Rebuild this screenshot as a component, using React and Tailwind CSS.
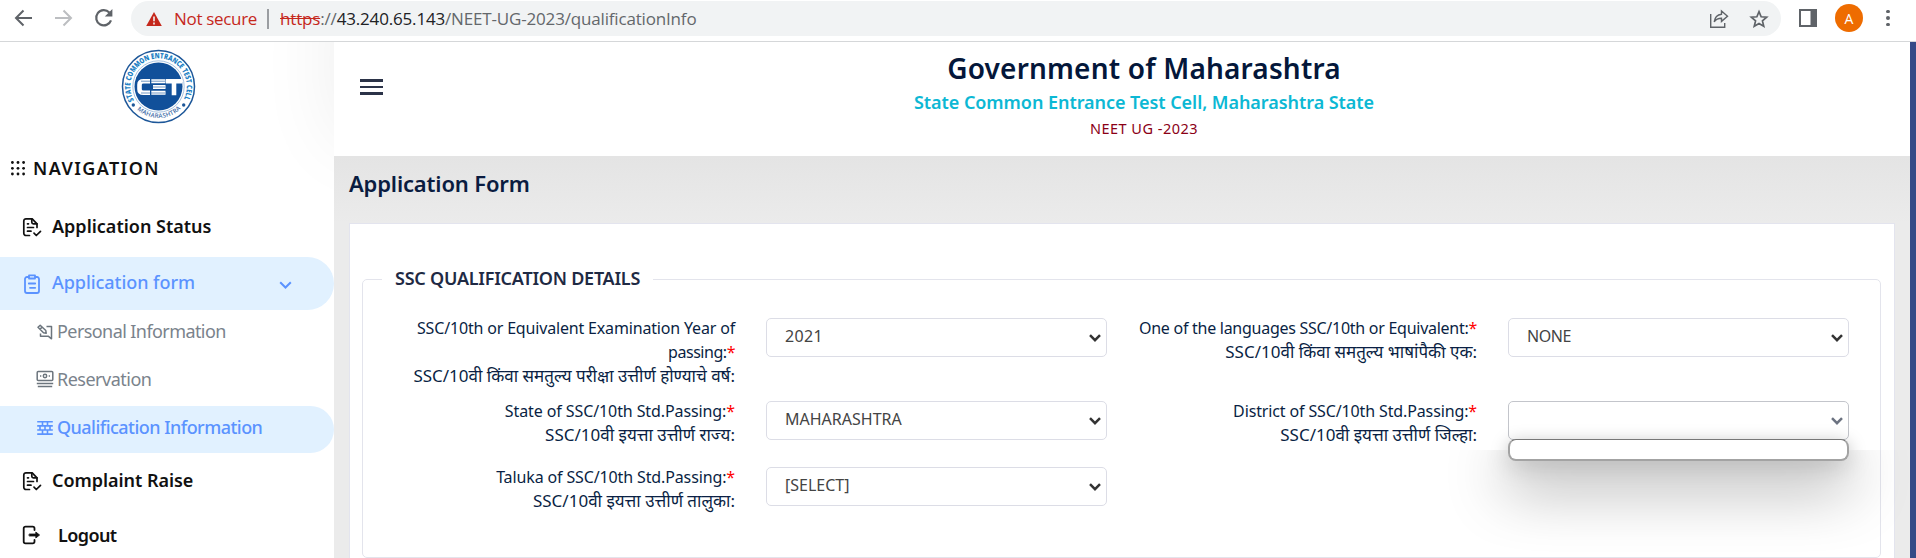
const ui = "font-['Noto_Sans',sans-serif]";

function BrowserBar() {
  return (
    <div className="flex h-[42px] w-full items-start border-b border-[#d5d7d9] bg-white font-['Open_Sans',sans-serif]">
      <div className="flex h-[36px] w-[131px] items-center pl-[13px]">
        <svg className="h-[22px] w-[22px]" viewBox="0 0 22 22" fill="none" stroke="#5f6368" strokeWidth="2">
          <path d="M19 11H3.5M10.5 3.5L3 11l7.5 7.5" />
        </svg>
        <svg className="ml-[18px] h-[22px] w-[22px]" viewBox="0 0 22 22" fill="none" stroke="#bcbec1" strokeWidth="2">
          <path d="M2 11h15.500M10.500 3.500L18 11l-7.500 7.500" />
        </svg>
        <svg className="ml-[18px] h-[22px] w-[22px]" viewBox="0 0 22 22" fill="none">
          <path d="M18 13.300A7.600 7.600 0 1 1 16.300 5.500" stroke="#5f6368" strokeWidth="2.200" />
          <path d="M19.400 2v7.600h-7.600z" fill="#5f6368" />
        </svg>
      </div>
      <div className="mt-px flex h-[35px] w-[1650px] items-center rounded-full bg-[#f1f3f4] pl-[15px] pr-[12px] text-[17px] leading-[35px]">
        <svg className="h-[16px] w-[16px]" viewBox="0 0 16 16">
          <path d="M8 1l7.800 14H.2z" fill="#c5281c" />
          <path d="M8 5.500v4.800M8 11.600v1.800" stroke="#f1f3f4" strokeWidth="1.600" />
        </svg>
        <span className="ml-[12px] w-[93px] whitespace-nowrap tracking-[-0.32px] text-[#c5281c]">Not secure</span>
        <span className="h-[20px] w-[2px] bg-[#9a9da1]" />
        <span className="ml-[11px] whitespace-nowrap tracking-[-0.17px] text-[#63676b]">
          <span className="text-[#c5281c] line-through">https</span>://
          <span className="text-[#202124]">43.240.65.143</span>/NEET-UG-2023/qualificationInfo
        </span>
        <svg className="ml-auto h-[20px] w-[20px]" viewBox="0 0 20 20" fill="none" stroke="#5f6368" strokeWidth="1.400">
          <path d="M1.700 5v13.200h14V14" />
          <path d="M12.500 2l6 5.200-6 5.200V9.300c-3.600 0-5.700 1.200-7.300 3.600.5-4 2.700-7.200 7.300-7.700z" />
        </svg>
        <svg className="ml-[20px] h-[20px] w-[20px]" viewBox="0 0 20 20" fill="none" stroke="#5f6368" strokeWidth="1.700">
          <path d="M10 2.700l2.150 5.100 5.500.45-4.200 3.600 1.300 5.400L10 14.400l-4.750 2.850 1.300-5.400-4.200-3.600 5.500-.45z" />
        </svg>
      </div>
      <div className="flex h-[36px] items-center pl-[18px]">
        <svg className="h-[18px] w-[18px]" viewBox="0 0 18 18">
          <path d="M1 1h16v16H1z" fill="none" stroke="#5f6368" strokeWidth="2" />
          <path d="M11.500 0H18v18h-6.500z" fill="#5f6368" />
        </svg>
        <div className="ml-[18px] flex h-[28px] w-[28px] items-center justify-center rounded-full bg-[#ee6c00] text-[14px] text-white">A</div>
        <div className="ml-[23px] flex flex-col gap-[3px]">
          <span className="h-[3.500px] w-[3.500px] rounded-full bg-[#5f6368]" />
          <span className="h-[3.500px] w-[3.500px] rounded-full bg-[#5f6368]" />
          <span className="h-[3.500px] w-[3.500px] rounded-full bg-[#5f6368]" />
        </div>
      </div>
    </div>
  );
}

function Logo() {
  return (
    <svg className="h-[75px] w-[75px]" viewBox="0 0 75 75">
      <defs>
        <path id="ringTop" d="M13.400 52.200A28.200 28.200 0 1 1 61.600 52.200" />
        <path id="ringBottom" d="M11.200 55.200A32 32 0 0 0 63.800 55.200" />
      </defs>
      <circle cx="37.500" cy="37.500" r="36" fill="#fff" stroke="#1d5799" strokeWidth="1.500" />
      <circle cx="37.500" cy="37.500" r="25.700" fill="none" stroke="#6d9bcb" strokeWidth=".6" />
      <circle cx="37.500" cy="37.500" r="24" fill="#11509a" />
      <text fontFamily="Open Sans, sans-serif" fontSize="7.600" fontWeight="800" fill="#1d7fc4">
        <textPath href="#ringTop" textLength="115" lengthAdjust="spacingAndGlyphs" startOffset="1">STATE COMMON ENTRANCE TEST CELL</textPath>
      </text>
      <text fontFamily="Open Sans, sans-serif" fontSize="6.200" fontWeight="600" fill="#3f6ea8">
        <textPath href="#ringBottom" textLength="48" startOffset="7.500">MAHARASHTRA</textPath>
      </text>
      <circle cx="12.300" cy="56" r="1.700" fill="#1d5799" />
      <circle cx="62.700" cy="56" r="1.700" fill="#1d5799" />
      <g fill="none" stroke="#fff" strokeWidth="4.600">
        <path d="M29 32.200h-6.500q-4 0-4 3.500v4.600q0 3.500 4 3.500H29" />
        <path d="M44.500 32.200H30M44.500 38H32M44.500 43.800H30" strokeWidth="4" />
        <path d="M45 32.200h16M53 32v14.300" />
      </g>
      <path d="M20 32.200h24M30 38h14M20 44h24M30 29.500v17" stroke="#11509a" strokeWidth=".6" />
    </svg>
  );
}

function StatusIcon() {
  return (
    <svg className="h-[20px] w-[20px] shrink-0" viewBox="0 0 20 20" fill="none" stroke="#111" strokeWidth="1.700" strokeLinecap="round" strokeLinejoin="round">
      <path d="M7.500 18.500H4a2.200 2.200 0 0 1-2.200-2.200V4A2.200 2.200 0 0 1 4 1.800h6.200l4.800 5v3.700" />
      <path d="M9.800 2v3.200A1.600 1.600 0 0 0 11.400 6.800H15" />
      <path d="M5.500 6.800h1M5.500 10.500h6M5.500 14.200h3.500M12 16.200l2.300 2.300 4.200-4.200" />
    </svg>
  );
}

function ClipboardIcon() {
  return (
    <svg className="h-[20px] w-[20px] shrink-0" viewBox="0 0 20 20" fill="none" stroke="#5b93ff" strokeWidth="1.800" strokeLinecap="round" strokeLinejoin="round">
      <path d="M6.500 3H5a2 2 0 0 0-2 2v12a2 2 0 0 0 2 2h10a2 2 0 0 0 2-2V5a2 2 0 0 0-2-2h-1.500" />
      <path d="M7 1.300h6v3.200H7zM6.800 9.500h6.400M8 13.800h5.200" />
    </svg>
  );
}

function EditIcon() {
  return (
    <svg className="h-[16px] w-[16px] shrink-0" viewBox="0 0 16 16" fill="none" stroke="#6c757d" strokeWidth="1.500" strokeLinejoin="round">
      <path d="M9.500 2.500H14.500V14.800L11.500 12.300H3.500V9.500" />
      <path d="M1 3.300L3.200 1.200l5.600 5.300.4 2.700-2.700-.4zM3 5.200l2.100-2.100" />
    </svg>
  );
}

function CashIcon() {
  return (
    <svg className="h-[18px] w-[18px] shrink-0" viewBox="0 0 18 18" fill="none" stroke="#6c757d" strokeWidth="1.500">
      <rect x="1.200" y="1.500" width="15.600" height="9" rx="1" />
      <circle cx="9" cy="6" r="1.700" />
      <path d="M4 6h1.300M12.700 6H14M.8 13.400h16.400M1.800 16.500h14.400" />
    </svg>
  );
}

function WallIcon() {
  return (
    <svg className="h-[16px] w-[16px] shrink-0" viewBox="0 0 16 16" fill="none" stroke="#5b93ff" strokeWidth="1.600">
      <path d="M.2 1.800h15.600M.2 5.900h15.600M.2 10h15.600M.2 14.100h15.600" />
      <path d="M5.500 1v4.500M10.500 1v4.500M3 6v4M8 6v4M13 6v4M5.500 10v4M10.500 10v4" />
    </svg>
  );
}

function LogoutIcon() {
  return (
    <svg className="h-[20px] w-[20px] shrink-0" viewBox="0 0 20 20" fill="none" stroke="#111" strokeWidth="1.800" strokeLinecap="round">
      <path d="M12.500 5V3.500A1.800 1.800 0 0 0 10.700 1.700H3.500A1.800 1.800 0 0 0 1.700 3.500v13a1.800 1.800 0 0 0 1.800 1.800h7.200a1.800 1.800 0 0 0 1.800-1.800V15" />
      <path d="M7.500 9h6.300V7l3.800 3-3.800 3v-2H7.500z" fill="#111" strokeWidth=".8" strokeLinejoin="round" />
    </svg>
  );
}

function Sidebar() {
  return (
    <aside className="relative flex w-[334px] shrink-0 flex-col bg-white text-[18px] text-[#111]">
      <div className="pointer-events-none absolute right-0 top-0 h-[200px] w-[70px] overflow-hidden">
        <div className="absolute -top-[60px] left-full h-[160px] w-[100px] shadow-[0_0_80px_rgba(0,0,0,0.070)]" />
      </div>
      <div className="flex h-[98px] justify-center pr-[18px] pt-[7px]">
        <Logo />
      </div>
      <div className="flex h-[57px] items-center gap-[8px] pl-[11px]">
        <svg className="h-[15px] w-[14px]" viewBox="0 0 14 15" fill="#111">
          {[1.500, 7.300, 13].map((y) => [1.400, 7, 12.600].map((x) => <circle key={`${x}-${y}`} cx={x} cy={y} r="1.400" />))}
        </svg>
        <span className="-mt-[2px] font-semibold leading-6 tracking-[1.400px]">NAVIGATION</span>
      </div>
      <div className="flex h-[60px] items-center gap-[10px] pl-[22px]">
        <StatusIcon />
        <span className="-mt-[2px] font-semibold tracking-[0px]">Application Status</span>
      </div>
      <div className="flex h-[53px] items-center gap-[10px] rounded-r-[27px] bg-[#e1f1ff] pl-[22px] text-[#5b93ff]">
        <ClipboardIcon />
        <span className="-mt-[2px] font-medium tracking-[-0.050px]">Application form</span>
        <svg className="ml-auto mr-[42px] mt-[2px] h-[8px] w-[13px]" viewBox="0 0 13 8" fill="none" stroke="#5b93ff" strokeWidth="2">
          <path d="M1.200 1.200l5.300 5.300 5.300-5.300" />
        </svg>
      </div>
      <div className="flex h-[46px] items-center gap-[4px] pb-[3px] pl-[37px] text-[#7a838c]">
        <EditIcon />
        <span className="tracking-[-0.580px]">Personal Information</span>
      </div>
      <div className="flex h-[50px] items-center gap-[3px] pb-[4px] pl-[36px] text-[#7a838c]">
        <CashIcon />
        <span className="tracking-[-0.500px]">Reservation</span>
      </div>
      <div className="flex h-[47px] items-center gap-[4px] rounded-r-[24px] bg-[#e1f1ff] pb-[4px] pl-[37px] text-[#5b93ff]">
        <WallIcon />
        <span className="font-medium tracking-[-0.530px]">Qualification Information</span>
      </div>
      <div className="flex h-[56px] items-center gap-[10px] pl-[22px]">
        <StatusIcon />
        <span className="-mt-[2px] font-semibold tracking-[-0.040px]">Complaint Raise</span>
      </div>
      <div className="flex h-[49px] items-center gap-[16px] pb-[1px] pl-[22px] pt-[4px]">
        <LogoutIcon />
        <span className="font-semibold tracking-[-0.600px]">Logout</span>
      </div>
    </aside>
  );
}

function Select({ children, tracking = "", active = false }) {
  return (
    <div
      className={`ml-[31px] mt-px flex h-[39px] w-[341px] shrink-0 items-center justify-between rounded-[5px] border bg-white pl-[18px] pr-[5px] text-[#444] ${
        active ? "border-[#c3c5cb]" : "border-[#dcdde6]"
      }`}
    >
      <span className={`pb-[3px] ${tracking}`}>{children}</span>
      <svg className="h-[8px] w-[12px]" viewBox="0 0 12 8" fill="none" stroke={active ? "#6b7280" : "#333"} strokeWidth="2.500">
        <path d="M1 1.200l5 5 5-5" />
      </svg>
    </div>
  );
}

function Star() {
  return <span className="text-[#ff0000]">*</span>;
}

function Label({ children, width = "w-[371px]" }) {
  return <div className={`-mt-px shrink-0 whitespace-nowrap text-right leading-6 text-[#0a1f44] ${width}`}>{children}</div>;
}

function Marathi({ children }) {
  return <div className="text-[17px] leading-6">{children}</div>;
}

function FormCard() {
  return (
    <div className="ml-[15px] h-[335px] w-[1546px] border border-b-0 border-[#e3e4ee] bg-white px-[12px] pt-[43px]">
      <fieldset className="h-[291px] w-[1519px] rounded-[5px] border border-[#e3e4ec] text-[16px]">
        <legend className="ml-[19px] px-[13px] text-[18px] font-semibold leading-6 tracking-[-0.250px] text-[#1f2a44]">
          <span className="relative -top-px">SSC QUALIFICATION DETAILS</span>
        </legend>
        <div className="mt-[26px] flex h-[83px] items-start">
          <Label width="w-[372px]">
            <div className="tracking-[-0.170px]">SSC/10th or Equivalent Examination Year of</div>
            <div className="tracking-[-0.460px]">passing:<Star /></div>
            <Marathi>SSC/10वी किंवा समतुल्य परीक्षा उत्तीर्ण होण्याचे वर्ष:</Marathi>
          </Label>
          <Select tracking="tracking-[0.350px]">2021</Select>
          <Label width="w-[370px]">
            <div className="tracking-[-0.270px]">One of the languages SSC/10th or Equivalent:<Star /></div>
            <Marathi>SSC/10वी किंवा समतुल्य भाषांपैकी एक:</Marathi>
          </Label>
          <Select tracking="tracking-[-0.450px]">NONE</Select>
        </div>
        <div className="flex h-[66px] items-start">
          <Label width="w-[372px]">
            <div className="tracking-[-0.100px]">State of SSC/10th Std.Passing:<Star /></div>
            <Marathi>SSC/10वी इयत्ता उत्तीर्ण राज्य:</Marathi>
          </Label>
          <Select>MAHARASHTRA</Select>
          <Label width="w-[370px]">
            <div className="tracking-[-0.130px]">District of SSC/10th Std.Passing:<Star /></div>
            <Marathi>SSC/10वी इयत्ता उत्तीर्ण जिल्हा:</Marathi>
          </Label>
          <div className="relative">
            <Select active />
            <div className="pointer-events-none absolute -left-[60px] -top-[10px] h-[60px] w-[462px] overflow-hidden">
              <div className="absolute left-[91px] top-[51px] h-[20px] w-[341px] rounded-[8px] shadow-[0_2px_18px_rgba(0,0,0,0.280)]" />
            </div>
            <div className="pointer-events-none absolute -left-[60px] top-[50px] h-[108px] w-[492px] overflow-hidden">
              <div className="absolute left-[91px] -top-[8px] h-[18px] w-[341px] rounded-[8px] shadow-[0_22px_60px_4px_rgba(0,0,0,0.420),0_4px_24px_rgba(0,0,0,0.220)]" />
            </div>
            <div className="absolute left-[31px] top-[39px] h-[22px] w-[341px] rounded-[8px] border-2 border-t border-[#a3a3a3] border-t-[#777] bg-white" />
          </div>
        </div>
        <div className="flex h-[66px] items-start">
          <Label width="w-[372px]">
            <div className="tracking-[-0.130px]">Taluka of SSC/10th Std.Passing:<Star /></div>
            <Marathi>SSC/10वी इयत्ता उत्तीर्ण तालुका:</Marathi>
          </Label>
          <Select>[SELECT]</Select>
        </div>
      </fieldset>
    </div>
  );
}

export default function App() {
  return (
    <div className={`flex h-[558px] w-[1916px] flex-col overflow-hidden bg-white ${ui}`}>
      <BrowserBar />
      <div className="flex h-[516px]">
        <Sidebar />
        <main className="flex w-[1576px] flex-col bg-[#ebebeb]">
          <header className="flex h-[114px] shrink-0 items-start bg-white">
            <div className="ml-[26px] mt-[37px] flex w-[23px] flex-col gap-[4px]">
              <span className="h-[2.500px] bg-[#2b3348]" />
              <span className="h-[2.500px] bg-[#2b3348]" />
              <span className="h-[2.500px] bg-[#2b3348]" />
            </div>
            <div className="flex flex-1 flex-col items-center pr-[5px] text-center">
              <h1 className="mt-[8px] text-[28px] font-semibold leading-[36px] tracking-[0.180px] text-[#04173a]">Government of Maharashtra</h1>
              <h2 className="mt-[4px] text-[18px] font-semibold leading-[24px] tracking-[-0.050px] text-[#0cb8d4]">State Common Entrance Test Cell, Maharashtra State</h2>
              <h3 className="mt-[4px] text-[14.500px] font-normal leading-[20px] tracking-[0.500px] text-[#8b0016]">NEET UG -2023</h3>
            </div>
          </header>
          <div className="flex h-[67px] shrink-0 items-center bg-linear-to-b from-[#e4e4e4] to-[#ebebeb] pb-[12px] pl-[15px]">
            <h4 className="text-[22px] font-semibold tracking-[-0.160px] text-[#0a1c40]">Application Form</h4>
          </div>
          <FormCard />
        </main>
        <div className="w-[6px] bg-[#354a87]" />
      </div>
    </div>
  );
}
